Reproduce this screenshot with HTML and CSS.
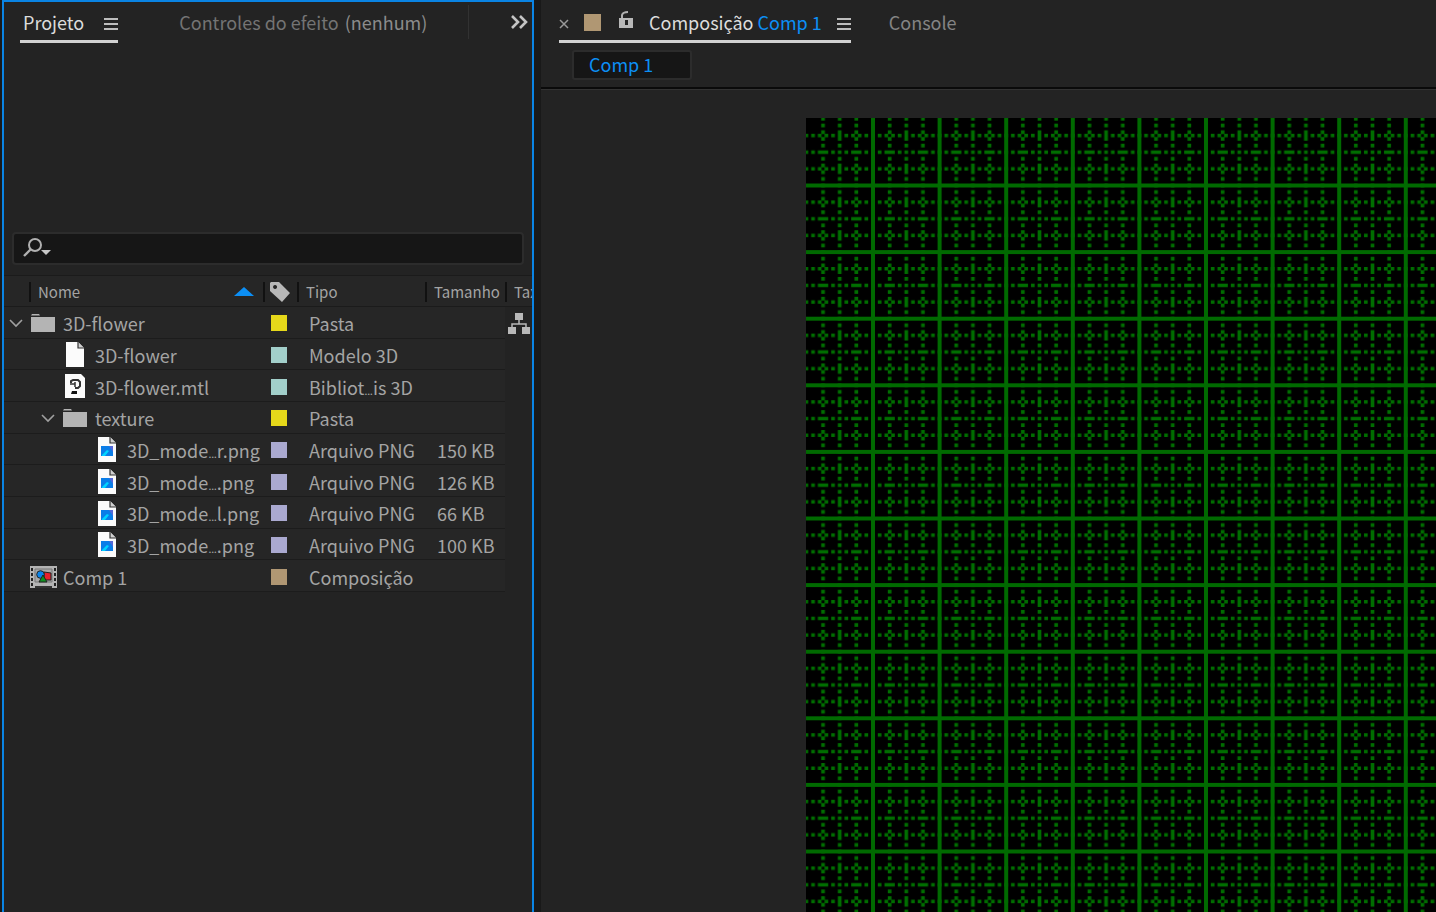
FILE: index.html
```
<!DOCTYPE html>
<html lang="pt-BR">
<head>
    <meta charset="UTF-8">
    <meta name="viewport" content="width=device-width, initial-scale=1.0">
    <title>Projeto</title>
    <link rel="stylesheet" href="styles.css">
</head>
<body>
    <!-- shared icons -->
    <svg class="defs" width="0" height="0" aria-hidden="true">
        <symbol id="menu" viewBox="0 0 14 14">
            <path d="M0 2h14M0 7h14M0 12h14" stroke="#bdbdbd" stroke-width="2"/>
        </symbol>
        <symbol id="arrow" viewBox="0 0 14 10">
            <path d="M1 2l6 6 6-6" fill="none" stroke="#a0a0a0" stroke-width="1.6"/>
        </symbol>
        <symbol id="folder" viewBox="0 0 24 20">
            <path d="M1 1h7l1 1.5H0z" fill="#b4b4b4"/>
            <path d="M0 4h24v15H0z" fill="#b4b4b4"/>
        </symbol>
        <symbol id="file" viewBox="0 0 20 25">
            <path d="M1 0h12l6 6v19H1z" fill="#fbfbfb"/>
            <path d="M13 0v6h6" fill="#d0d0d0" stroke="#333" stroke-width="1.2"/>
        </symbol>
        <symbol id="unknown" viewBox="0 0 20 25">
            <path d="M0 0h16l4 4v20H0z" fill="#fbfbfb"/>
            <path d="M6 9V7l2-1h5l2 2v4l-2 2h-3" fill="none" stroke="#333" stroke-width="2"/>
            <path d="M5 10h5M10 8v5" stroke="#333" stroke-width="1.5"/>
            <path d="M7 17h5v3H6z" fill="#111"/>
        </symbol>
        <symbol id="image" viewBox="0 0 20 25">
            <path d="M1 0h12l6 6v19H1z" fill="#fbfbfb"/>
            <path d="M13 0v6h6" fill="#d0d0d0" stroke="#333" stroke-width="1.2"/>
            <path d="M4 9h12v10H4z" fill="#0a7de8"/>
            <path d="M12 9h4v6z" fill="#5468d8"/>
            <path d="M5 18l5-5 2 1-4 5H5z" fill="#00d4ff"/>
        </symbol>
        <symbol id="comp" viewBox="0 0 27 22">
            <path d="M0 0h27v22H0z" fill="#b4b4b4"/>
            <path d="M2 2v20M25 2v20" stroke="#222" stroke-width="2" stroke-dasharray="3 2"/>
            <path d="M5 3h17v13H5z" fill="#a8a8a8" stroke="#777" stroke-width="1"/>
            <path d="M5 20h17v2H5z" fill="#333"/>
            <path d="M14 6l7 1v7h-7z" fill="#e8202c" stroke="#222" stroke-width="1"/>
            <circle cx="10.500" cy="8.500" r="3.800" fill="#0a84ea" stroke="#222" stroke-width="1"/>
            <path d="M13 9l4 7H9z" fill="#109020" stroke="#222" stroke-width="1"/>
        </symbol>
    </svg>

    <div class="workspace">
        <section class="panel project">
            <div class="tabs">
                <div class="tab active">
                    <a href="#projeto">Projeto</a>
                    <button class="icon-button menu" aria-label="Menu do projeto"><svg width="14" height="14"><use href="#menu"/></svg></button>
                </div>
                <a class="tab effects" href="#efeito">Controles do efeito <span class="none">(nenhum)</span></a>
                <button class="icon-button more" aria-label="Mais painéis">
                    <svg width="18" height="14" viewBox="0 0 18 14"><path d="M2 1l6 6-6 6M10 1l6 6-6 6" fill="none" stroke="#c4c4c4" stroke-width="2.6"/></svg>
                </button>
            </div>
            <div class="preview"></div>
            <label class="search">
                <svg width="30" height="20" viewBox="0 0 30 20">
                    <circle cx="12" cy="7" r="6" fill="none" stroke="#b0b0b0" stroke-width="2"/>
                    <path d="M8 11l-7 7" stroke="#b0b0b0" stroke-width="2.400"/>
                    <path d="M18 12h10l-5 5z" fill="#c8c8c8"/>
                </svg>
                <input type="text" aria-label="Pesquisar">
            </label>

            <table class="items">
                <colgroup>
                    <col>
                    <col class="col-label">
                    <col class="col-type">
                    <col class="col-size">
                    <col class="col-rate">
                </colgroup>
                <thead>
                    <tr>
                        <th>
                            <div class="sort">Nome
                                <svg width="20" height="9" viewBox="0 0 20 9"><path d="M10 0l10 9H0z" fill="#0c8ff5"/></svg>
                            </div>
                        </th>
                        <th class="tag">
                            <svg width="20" height="20" viewBox="0 0 20 20"><path fill-rule="evenodd" d="M1 0h8l11 11-8 9L0 9V1zM5 3a2 2 0 1 0 .1 0z" fill="#b8b8b8"/></svg>
                        </th>
                        <th>Tipo</th>
                        <th>Tamanho</th>
                        <th class="rate">Taxa</th>
                    </tr>
                </thead>
                <tbody>
                    <tr>
                        <td><div class="name"><svg class="arrow" width="14" height="10"><use href="#arrow"/></svg><svg width="24" height="20"><use href="#folder"/></svg>3D-flower</div></td>
                        <td><span class="swatch yellow"></span></td>
                        <td>Pasta</td>
                        <td></td>
                        <td class="rate">
                            <svg width="22" height="21" viewBox="0 0 22 21">
                                <path d="M11 7v4M4 15v-4h14v4" fill="none" stroke="#b8b8b8" stroke-width="1.500"/>
                                <path d="M7 0h8v7H7zM0 14h8v7H0zM14 14h8v7h-8z" fill="#b8b8b8"/>
                            </svg>
                        </td>
                    </tr>
                    <tr>
                        <td><div class="name level-1"><svg width="20" height="25"><use href="#file"/></svg>3D-flower</div></td>
                        <td><span class="swatch aqua"></span></td>
                        <td>Modelo 3D</td>
                        <td></td>
                        <td class="rate"></td>
                    </tr>
                    <tr>
                        <td><div class="name level-1"><svg width="20" height="25"><use href="#unknown"/></svg>3D-flower.mtl</div></td>
                        <td><span class="swatch aqua"></span></td>
                        <td>Bibliot<span class="dots">…</span>is 3D</td>
                        <td></td>
                        <td class="rate"></td>
                    </tr>
                    <tr>
                        <td><div class="name level-1"><svg class="arrow" width="14" height="10"><use href="#arrow"/></svg><svg width="24" height="20"><use href="#folder"/></svg>texture</div></td>
                        <td><span class="swatch yellow"></span></td>
                        <td>Pasta</td>
                        <td></td>
                        <td class="rate"></td>
                    </tr>
                    <tr>
                        <td><div class="name level-2"><svg width="20" height="25"><use href="#image"/></svg><span>3D_mode<span class="dots">…</span>r.png</span></div></td>
                        <td><span class="swatch lavender"></span></td>
                        <td>Arquivo PNG</td>
                        <td>150 KB</td>
                        <td class="rate"></td>
                    </tr>
                    <tr>
                        <td><div class="name level-2"><svg width="20" height="25"><use href="#image"/></svg><span>3D_mode<span class="dots">…</span>.png</span></div></td>
                        <td><span class="swatch lavender"></span></td>
                        <td>Arquivo PNG</td>
                        <td>126 KB</td>
                        <td class="rate"></td>
                    </tr>
                    <tr>
                        <td><div class="name level-2"><svg width="20" height="25"><use href="#image"/></svg><span>3D_mode<span class="dots">…</span>l.png</span></div></td>
                        <td><span class="swatch lavender"></span></td>
                        <td>Arquivo PNG</td>
                        <td>66 KB</td>
                        <td class="rate"></td>
                    </tr>
                    <tr>
                        <td><div class="name level-2"><svg width="20" height="25"><use href="#image"/></svg><span>3D_mode<span class="dots">…</span>.png</span></div></td>
                        <td><span class="swatch lavender"></span></td>
                        <td>Arquivo PNG</td>
                        <td>100 KB</td>
                        <td class="rate"></td>
                    </tr>
                    <tr>
                        <td><div class="name comp"><svg width="27" height="22"><use href="#comp"/></svg>Comp 1</div></td>
                        <td><span class="swatch sand"></span></td>
                        <td>Composição</td>
                        <td></td>
                        <td class="rate"></td>
                    </tr>
                </tbody>
            </table>
        </section>

        <section class="panel composition">
            <div class="tabs">
                <div class="tab active">
                    <button class="icon-button close" aria-label="Fechar"><svg width="10" height="10" viewBox="0 0 10 10"><path d="M1 1l8 8M9 1l-8 8" stroke="#9a9a9a" stroke-width="1.500"/></svg></button>
                    <span class="swatch sand big"></span>
                    <button class="icon-button lock" aria-label="Bloquear">
                        <svg width="14" height="18" viewBox="0 0 14 18">
                            <path d="M3 8V4q1-3 6-3" fill="none" stroke="#b0b0b0" stroke-width="2"/>
                            <path fill-rule="evenodd" d="M0 7h14v10H0zM6 9v5h3V9z" fill="#b8b8b8"/>
                        </svg>
                    </button>
                    <a href="#comp">Composição<span class="blue">Comp 1</span></a>
                    <button class="icon-button menu" aria-label="Menu da composição"><svg width="14" height="14"><use href="#menu"/></svg></button>
                </div>
                <a class="tab" href="#console">Console</a>
            </div>
            <div class="crumbs">
                <button class="crumb">Comp 1</button>
            </div>
            <div class="viewer">
                <svg class="canvas" role="img" aria-label="Grade">
                    <defs>
                        <!-- one grid cell is 40 units, with dashed lines every 10 -->
                        <pattern id="minor" width="40" height="40" patternUnits="userSpaceOnUse" patternTransform="translate(0.400 0.900) scale(1.665)">
                            <path d="M10 0v40M20 0v40M30 0v40M0 10h40M0 20h40M0 30h40" stroke="#006e00" stroke-width="2.200" stroke-dasharray="2.200 1.800" stroke-dashoffset="1.100"/>
                        </pattern>
                        <pattern id="columns" width="40" height="40" patternUnits="userSpaceOnUse" patternTransform="translate(-2.600 0) scale(1.665)">
                            <path d="M0 0h1.200v40H0zM38.800 0H40v40h-1.200z" fill="#006a00"/>
                        </pattern>
                        <pattern id="rows" width="40" height="40" patternUnits="userSpaceOnUse" patternTransform="translate(0 -2.100) scale(1.665)">
                            <path d="M0 0h40v1.200H0zM0 38.800h40V40H0z" fill="#006a00"/>
                        </pattern>
                    </defs>
                    <rect width="100%" height="100%" fill="#000"/>
                    <rect width="100%" height="100%" fill="url(#minor)"/>
                    <!-- solid lines, none on the outer edge -->
                    <svg x="3" width="100%" height="100%">
                        <rect width="100%" height="100%" fill="url(#columns)"/>
                    </svg>
                    <svg y="3" width="100%" height="100%">
                        <rect width="100%" height="100%" fill="url(#rows)"/>
                    </svg>
                </svg>
            </div>
        </section>
    </div>
</body>
</html>
```
FILE: styles.css
```
* {
    box-sizing: border-box;
}

body {
    margin: 0;
    background-color: #191919;
    color: #a4a4a4;
    font-family: "Noto Sans CJK SC", "Open Sans", sans-serif;
    font-size: 18px;
    line-height: 24px;
}

a {
    color: inherit;
    text-decoration: none;
}

button,
input {
    font: inherit;
    color: inherit;
}

svg {
    display: block;
    flex-shrink: 0;
}

.defs {
    position: absolute;
}

.icon-button {
    padding: 0;
    border: 0;
    background: none;
    cursor: pointer;
}

.workspace {
    display: flex;
    gap: 7px;
    height: 100vh;
    padding-left: 2px;
}

.panel {
    display: flex;
    flex-direction: column;
    background-color: #232323;
    overflow: hidden;
}

.project {
    flex: 0 0 532px;
    border: 2px solid #0a84e4;
    border-bottom: 0;
}

.composition {
    flex: 1;
    min-width: 0;
}

/* tabs */
.tabs {
    display: flex;
    align-items: flex-start;
    white-space: nowrap;
}

.tab {
    display: flex;
    align-items: center;
    height: 41px;
    color: #848484;
    padding-top: 2px;
}

.tab.active {
    color: #dcdcdc;
    border-bottom: 3px solid #d2d2d2;
}

.project .tabs {
    padding-left: 16px;
}

.project .tab.active {
    padding-left: 3px;
}

.project .menu {
    margin-left: 20px;
}

.tab .menu {
    padding-top: 3px;
}

.effects {
    margin-left: 61px;
    padding-bottom: 3px;
    gap: 6px;
    color: #747474;
}

.none {
    color: #8c8c8c;
}

.more {
    height: 34px;
    margin: 3px 4px 0 auto;
    padding-left: 41px;
    border-left: 1px solid #323232;
}

.preview {
    height: 189px;
}

/* search */
.search {
    display: flex;
    align-items: center;
    height: 33px;
    margin: 0 8px;
    padding: 0 0 2px 9px;
    background-color: #161616;
    border: 2px solid #2c2c2c;
    border-radius: 4px;
}

.search input {
    flex: 1;
    min-width: 0;
    border: 0;
    outline: 0;
    background: none;
}

/* item list */
.items {
    width: 100%;
    height: 317px;
    margin-top: 10px;
    table-layout: fixed;
    border-collapse: separate;
    border-spacing: 0;
    white-space: nowrap;
}

.col-label {
    width: 34px;
}

.col-type {
    width: 128px;
}

.col-size {
    width: 80px;
}

.col-rate {
    width: 27px;
}

.items th {
    height: 32px;
    padding: 1px 0 0 9px;
    border-top: 1px solid #1b1b1b;
    border-bottom: 1px solid #1b1b1b;
    background: linear-gradient(#111, #111) 0 6px / 2px 20px no-repeat #262626;
    font-size: 15px;
    font-weight: normal;
    text-align: left;
    overflow: hidden;
}

.items th:first-child {
    padding-left: 34px;
    background-position: 25px 6px;
}

.items th.tag {
    padding-left: 7px;
}

.sort {
    display: flex;
    align-items: center;
    justify-content: space-between;
    padding-right: 9px;
}

.items td {
    height: 31px;
    padding: 2px 0 0 12px;
    border-bottom: 1px solid #1c1c1c;
    background-color: #262626;
}

.items td:first-child {
    padding-left: 0;
}

.items td:nth-child(2) {
    padding-left: 8px;
}

.items td.rate {
    padding-left: 3px;
    border-bottom: 0;
    background: none;
}

.name {
    display: flex;
    align-items: center;
    gap: 10px;
    padding-left: 27px;
}

.comp {
    gap: 6px;
    padding-left: 26px;
}

.level-1 {
    padding-left: 61px;
}

.level-2 {
    padding-left: 93px;
}

.name:has(.arrow) {
    gap: 8px;
    padding-left: 5px;
}

.level-1:has(.arrow) {
    padding-left: 37px;
}

.dots {
    font-family: Roboto, sans-serif;
    font-size: 13px;
    line-height: 1;
}

.swatch {
    display: block;
    width: 16px;
    height: 16px;
}

.big {
    width: 17px;
    height: 17px;
}

.yellow {
    background-color: #e6d81a;
}

.aqua {
    background-color: #a2cfca;
}

.lavender {
    background-color: #aaa9d0;
}

.sand {
    background-color: #b09773;
}

/* composition */
.composition .tabs {
    gap: 38px;
    padding: 2px 18px 0;
}

.close {
    padding-top: 4px;
}

.composition .tab.active .big {
    margin: 0 18px 0 15px;
}

.lock {
    margin: 0 16px 4px 0;
}

.composition .menu {
    margin-left: 15px;
}

.composition .tab:last-child {
    padding-bottom: 3px;
}

.blue,
.crumb {
    color: #0c8ff5;
}

.blue {
    margin-left: 4px;
}

.crumbs {
    padding: 7px 31px;
    border-bottom: 2px solid #0a0a0a;
}

.crumb {
    display: block;
    width: 120px;
    height: 30px;
    padding: 0 15px 2px;
    background-color: #161616;
    border: 2px solid #2c2c2c;
    border-radius: 3px;
    text-align: left;
    line-height: 24px;
}

.viewer {
    display: flex;
    flex: 1;
    min-height: 0;
    padding: 28px 0 0 265px;
    border-top: 1px solid #333;
}

.canvas {
    flex: 1;
    height: 100%;
}
```
